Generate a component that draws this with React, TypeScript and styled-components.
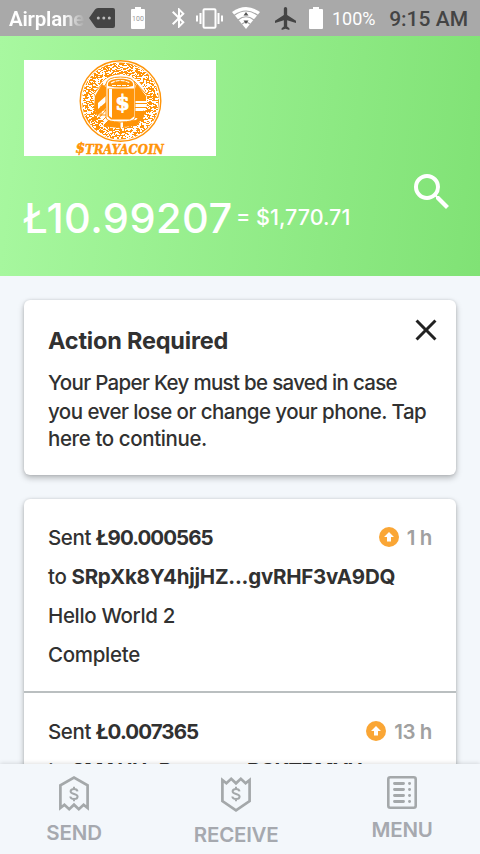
import React from 'react';
import styled, { createGlobalStyle } from 'styled-components';
import { MdBluetooth, MdClose, MdSearch } from 'react-icons/md';

const GlobalStyle = createGlobalStyle`
  * { box-sizing: border-box; }
  html, body { margin: 0; padding: 0; overflow: hidden; }
  body { font-family: Inter, 'Open Sans', sans-serif; color: #313131; background: #f3f7fb; }
  svg { display: block; flex: none; }
`;

const Screen = styled.div`
  display: flex;
  flex-direction: column;
  width: 480px;
  height: 854px;
  overflow: hidden;
  background: #f3f7fb;
`;

const StatusBar = styled.div`
  display: flex;
  align-items: center;
  flex: none;
  height: 36px;
  padding: 0 12px 0 9px;
  background: #a9a9a9;
  color: #fff;
  font-family: Roboto, sans-serif;
`;

const Carrier = styled.span`
  width: 76px;
  white-space: nowrap;
  font-size: 20.5px;
  font-weight: 600;
  letter-spacing: -0.2px;
  line-height: 36px;
  padding-top: 2px;
  mask-image: linear-gradient(90deg, #000 54px, transparent 76px);
`;

const StatusIcon = styled.span<{ $gap: number }>`
  display: flex;
  margin-left: ${p => p.$gap}px;
`;

const Percent = styled.span`
  width: 44px;
  margin-left: 9px;
  font-size: 18px;
  line-height: 36px;
  padding-top: 2px;
  white-space: nowrap;
`;

const Clock = styled.span`
  margin-left: auto;
  color: #444;
  font-size: 21px;
  font-weight: 500;
  line-height: 36px;
  padding-top: 2px;
  white-space: nowrap;
`;

const Header = styled.header`
  flex: none;
  height: 240px;
  padding: 24px 24px 0;
  background: linear-gradient(96deg, #a8f8a0 0%, #80e275 100%);
  color: #fff;
`;

const LogoBox = styled.div`
  width: 192px;
  height: 96px;
  background: #fff;
`;

const BalanceRow = styled.div`
  display: flex;
  align-items: flex-start;
  margin-top: 36px;
  height: 52px;
  line-height: 52px;
  white-space: nowrap;
`;

const Amount = styled.span`
  width: 213px;
  margin-left: -1px;
  font-size: 41.5px;
  font-weight: 450;
  letter-spacing: 0.45px;
`;

const Fiat = styled.span`
  flex: 1;
  margin-top: -1px;
  font-size: 21.5px;
  font-weight: 500;
  letter-spacing: 0;
`;

const SearchButton = styled.span`
  height: 48px;
  margin: -24px 0 0;
`;

const Content = styled.main`
  flex: 1;
  min-height: 0;
  overflow: hidden;
  padding: 24px 24px 0;
`;

const Card = styled.section`
  border-radius: 6px;
  background: #fff;
  box-shadow: 0 3px 6px rgba(0, 0, 0, 0.26), 0 0 3px rgba(0, 0, 0, 0.12);
`;

const Notice = styled(Card)`
  height: 175px;
  padding: 25px 18px 0 24px;
  margin-bottom: 24px;
`;

const NoticeHead = styled.div`
  display: flex;
  justify-content: space-between;
  height: 44px;
`;

const NoticeTitle = styled.h1`
  margin: 0;
  font-size: 23.5px;
  line-height: 32px;
  font-weight: 700;
  letter-spacing: -0.2px;
`;

const CloseButton = styled.span`
  height: 36px;
  margin: -13px -6px 0 0;
  color: #222;
`;

const NoticeLine = styled.div<{ $track: number; $height?: number }>`
  height: ${p => p.$height ?? 28}px;
  line-height: 28px;
  font-size: 20.5px;
  font-weight: 500;
  letter-spacing: ${p => p.$track}px;
  white-space: nowrap;
`;

const Transaction = styled.article`
  height: 194px;
  padding: 19px 24px 0;
  border-bottom: 2px solid #babfc0;
`;

const Line = styled.div<{ $track?: number }>`
  display: flex;
  align-items: center;
  height: 39px;
  font-size: 20.5px;
  font-weight: 500;
  letter-spacing: ${p => p.$track ?? -0.4}px;
  white-space: pre;
`;

const Strong = styled.b<{ $track?: number }>`
  font-weight: 700;
  letter-spacing: ${p => p.$track ?? 0}px;
`;

const Age = styled.span`
  display: flex;
  align-items: center;
  gap: 8px;
  margin-left: auto;
  color: #a0a0a0;
  font-weight: 600;

  svg { margin-bottom: 2px; }
`;

const Footer = styled.nav`
  position: relative;
  display: flex;
  flex: none;
  height: 90px;
  background: #f3f7fb;
  box-shadow: 0 -1px 4px rgba(0, 0, 0, 0.12);
`;

const Tab = styled.div<{ $width: number }>`
  display: flex;
  flex-direction: column;
  align-items: center;
  width: ${p => p.$width}px;
  padding-top: 12px;
  color: #a4a8aa;
`;

const TabLabel = styled.span<{ $gap: number; $track: number }>`
  margin-top: ${p => p.$gap}px;
  font-size: 20.5px;
  line-height: 24px;
  font-weight: 600;
  letter-spacing: ${p => p.$track}px;
  margin-right: ${p => p.$track}px;
  color: #a6a9af;
`;

const ORANGE = '#ff9408';

function ringCells() {
  let seed = 71;
  const rnd = () => {
    seed = (seed * 16807) % 2147483647;
    return seed / 2147483647;
  };
  let d = '';
  for (let y = -40; y < 40; y += 1) {
    for (let x = -40; x < 40; x += 1) {
      const r = Math.hypot(x + 0.5, y + 0.5);
      if (r > 26.5 && r < 38.5 && rnd() < 0.36) {
        const w = rnd() < 0.5 ? 2 : 1;
        d += `M${96 + x} ${41 + y}h${w}v1h-${w}z`;
      }
    }
  }
  return d;
}
const RING = ringCells();

function Logo() {
  return (
    <svg width="192" height="96" viewBox="0 0 192 96">
      <circle cx="96.5" cy="41" r="40.3" fill="#fff" stroke={ORANGE} strokeWidth="1.4" />
      <circle cx="96.5" cy="41" r="32.5" fill="none" stroke={ORANGE} strokeWidth="12" />
      <path d={RING} fill="#fff" shapeRendering="crispEdges" />
      <circle cx="96.5" cy="41" r="26.3" fill="#fff" />
      <path d="M71 36l7-12 5 4v7l-9 8v6l8-7v6l-9 8-3-8zM79 66l8-8 9 5v5l-11-1zM99 67v-6l13-1 8-10v7l-9 9zM113 24l9 12v5h-12v-10zM110 51h12l-3 7h-9z" fill={ORANGE} />
      <path d="M79 23l-8 9M84 22l-11 12M110 21l12 13M107 19l14 17M73 60l9-10M76 63l9-9M80 65l7-7M112 65l9-12M106 67l9-9M96 62v7M102 61v8M75 50h7M75 55h7M77 46v10" stroke={ORANGE} strokeWidth="1" fill="none" />
      <path d="M82 24q1-7 14.500-7t14.500 7v34q-1 4-14.500 4t-14.500-4z" fill="#fff" stroke={ORANGE} strokeWidth="1" />
      <path d="M84 24c0-7 25-7 25 0v2q-12 3-25 0zM83.500 28.500h26.500v28l-4 3h-19l-3.500-3z" fill={ORANGE} />
      <path d="M87 23q9.500-5 19 0M88 25.500h17" stroke="#fff" strokeWidth="1.200" fill="none" strokeDasharray="4 1" />
      <path d="M85 29h3v29l-3-2z" fill="#fff" />
      <text x="98.500" y="50" textAnchor="middle" fontFamily="DejaVu Serif, serif" fontWeight="700" fontSize="21" fill="#fff" stroke="#fff" strokeWidth=".8">$</text>
      <path d="M111 43.500h12M111 47.500h12" stroke={ORANGE} strokeWidth="1" />
      <text x="51.500" y="93" fontFamily="DejaVu Serif, serif" fontStyle="italic" fontWeight="700" fontSize="14" fill={ORANGE} stroke={ORANGE} strokeWidth=".5">$</text>
      <text x="61" y="93.500" fontFamily="DejaVu Serif, serif" fontStyle="italic" fontWeight="700" fontSize="12" textLength="79" lengthAdjust="spacingAndGlyphs" fill={ORANGE} stroke={ORANGE} strokeWidth=".4">TRAYACOIN</text>
    </svg>
  );
}

const TagIcon = () => (
  <svg width="26" height="20" viewBox="0 0 26 20">
    <path d="M0 10L6 1.500Q7 0 9 0h15q2 0 2 2v16q0 2-2 2H9q-2 0-3-1.500z" fill="#444" />
    <circle cx="9.300" cy="10" r="1.500" fill="#bbb" />
    <circle cx="14.800" cy="10" r="1.500" fill="#bbb" />
    <circle cx="20.300" cy="10" r="1.500" fill="#bbb" />
  </svg>
);

const BatteryIcon = ({ label }: { label?: string }) => (
  <svg width="14" height="22" viewBox="0 0 14 22">
    <path d="M4 0h6v2h3q1 0 1 1v18q0 1-1 1H1q-1 0-1-1V3q0-1 1-1h3z" fill="#fff" />
    {label && <text x="7" y="13.500" textAnchor="middle" fontFamily="Roboto, sans-serif" fontSize="7" fill="#999">{label}</text>}
  </svg>
);

const VibrateIcon = () => (
  <svg width="27" height="21" viewBox="0 0 27 21" fill="none" stroke="#fff" strokeWidth="2">
    <rect x="7.500" y="1.200" width="12" height="18.600" rx="1" />
    <path d="M4.500 5v11M1 7.500v6M22.500 5v11M26 7.500v6" />
  </svg>
);

const WifiIcon = () => (
  <svg width="28" height="22" viewBox="0 0 28 22">
    <path d="M0 5Q14-5 28 5L14 22z" fill="#fff" />
    <path d="M2 8.500q12-9 24 0M6 13q8-6.500 16 0M10 17q4-3.500 8 0" fill="none" stroke="#a9a9a9" strokeWidth="1.200" />
    <path d="M14 5l2.500 3.500h-5zM11.500 13.500h5l-2.500 3.500z" fill="#555" />
  </svg>
);

const PlaneIcon = () => (
  <svg width="21" height="23" viewBox="2 2 19 20" preserveAspectRatio="none">
    <path fill="#444" d="M21 16v-2l-8-5V3.500c0-.83-.67-1.500-1.500-1.500S10 2.670 10 3.500V9l-8 5v2l8-2.500V19l-2 1.500V22l3.500-1 3.500 1v-1.500L13 19v-5.500l8 2.500z" />
  </svg>
);

const UpIcon = () => (
  <svg width="20" height="20" viewBox="0 0 20 20">
    <circle cx="10" cy="10" r="10" fill="#faa635" />
    <path d="M10 5l5 5h-3v4.500H8V10H5z" fill="#fff" />
  </svg>
);

const Dollar = ({ y }: { y: number }) => (
  <g transform={`translate(15 ${y})`} fill="none" strokeWidth="2">
    <path d="M3.500-2.600C3.300-4.300 1.900-5.100 0-5.100S-3.400-4.300-3.400-2.600C-3.400.6 3.600-.7 3.600 2.500 3.600 4.200 2.100 5.100 0 5.100S-3.500 4.200-3.700 2.500M0-7.200v2.200M0 5v2.200" />
  </g>
);

const SendIcon = () => (
  <svg width="30" height="36" viewBox="0 0 30 36" fill="none" stroke="currentColor" strokeWidth="2.700">
    <path d="M1.400 32V9.300L15 1.600l13.600 7.700V32l-4-3.300-4.800 4.500-4.800-4.500-4.800 4.500-4.800-4.500z" />
    <Dollar y={18} />
  </svg>
);

const ReceiveIcon = () => (
  <svg width="30" height="36" viewBox="0 0 30 36" fill="none" stroke="currentColor" strokeWidth="2.700">
    <path d="M1.400 4v21L15 34.300 28.600 25V4l-4 3.300-4.800-4.500L15 7.300l-4.800-4.500-4.800 4.500z" />
    <Dollar y={18} />
  </svg>
);

const MenuIcon = () => (
  <svg width="30" height="33" viewBox="0 0 30 33" fill="none" stroke="currentColor" strokeLinecap="round">
    <rect x="1.300" y="1.300" width="27.400" height="30.400" rx="2" strokeWidth="2.600" />
    <path d="M7.500 7.500h9M7.500 13.500h9M7.500 19.500h9M7.500 25.500h9M22.500 7.500h.1M22.500 13.500h.1M22.500 19.500h.1M22.500 25.500h.1" strokeWidth="2.900" />
  </svg>
);

export default function App() {
  return (
    <>
      <GlobalStyle />
      <Screen>
        <StatusBar>
          <Carrier>Airplane</Carrier>
          <StatusIcon $gap={4}><TagIcon /></StatusIcon>
          <StatusIcon $gap={16}><BatteryIcon label="100" /></StatusIcon>
          <StatusIcon $gap={22}><MdBluetooth size={24} /></StatusIcon>
          <StatusIcon $gap={5}><VibrateIcon /></StatusIcon>
          <StatusIcon $gap={9}><WifiIcon /></StatusIcon>
          <StatusIcon $gap={15}><PlaneIcon /></StatusIcon>
          <StatusIcon $gap={13}><BatteryIcon /></StatusIcon>
          <Percent>100%</Percent>
          <Clock>9:15 AM</Clock>
        </StatusBar>
        <Header>
          <LogoBox><Logo /></LogoBox>
          <BalanceRow>
            <Amount>Ł10.99207</Amount>
            <Fiat>= $1,770.71</Fiat>
            <SearchButton><MdSearch size={48} /></SearchButton>
          </BalanceRow>
        </Header>
        <Content>
          <Notice>
            <NoticeHead>
              <NoticeTitle>Action Required</NoticeTitle>
              <CloseButton><MdClose size={36} /></CloseButton>
            </NoticeHead>
            <NoticeLine $track={-0.68} $height={29}>Your Paper Key must be saved in case</NoticeLine>
            <NoticeLine $track={-0.54} $height={27}>you ever lose or change your phone. Tap</NoticeLine>
            <NoticeLine $track={-0.4}>here to continue.</NoticeLine>
          </Notice>
          <Card>
            <Transaction>
              <Line>Sent <Strong $track={-0.95}>Ł90.000565</Strong><Age><UpIcon />1 h</Age></Line>
              <Line>to <Strong $track={-0.23}>SRpXk8Y4hjjHZ...gvRHF3vA9DQ</Strong></Line>
              <Line $track={-0.35}>Hello World 2</Line>
              <Line $track={-0.3}>Complete</Line>
            </Transaction>
            <Transaction>
              <Line>Sent <Strong $track={-0.9}>Ł0.007365</Strong><Age><UpIcon />13 h</Age></Line>
              <Line>to <Strong $track={-0.65}>SMAHHuRmcnw...BCKTBMVH</Strong></Line>
            </Transaction>
          </Card>
        </Content>
        <Footer>
          <Tab $width={148}><SendIcon /><TabLabel $gap={9} $track={-0.1}>SEND</TabLabel></Tab>
          <Tab $width={176}><ReceiveIcon /><TabLabel $gap={11} $track={-0.25}>RECEIVE</TabLabel></Tab>
          <Tab $width={156}><MenuIcon /><TabLabel $gap={9} $track={-0.2}>MENU</TabLabel></Tab>
        </Footer>
      </Screen>
    </>
  );
}
